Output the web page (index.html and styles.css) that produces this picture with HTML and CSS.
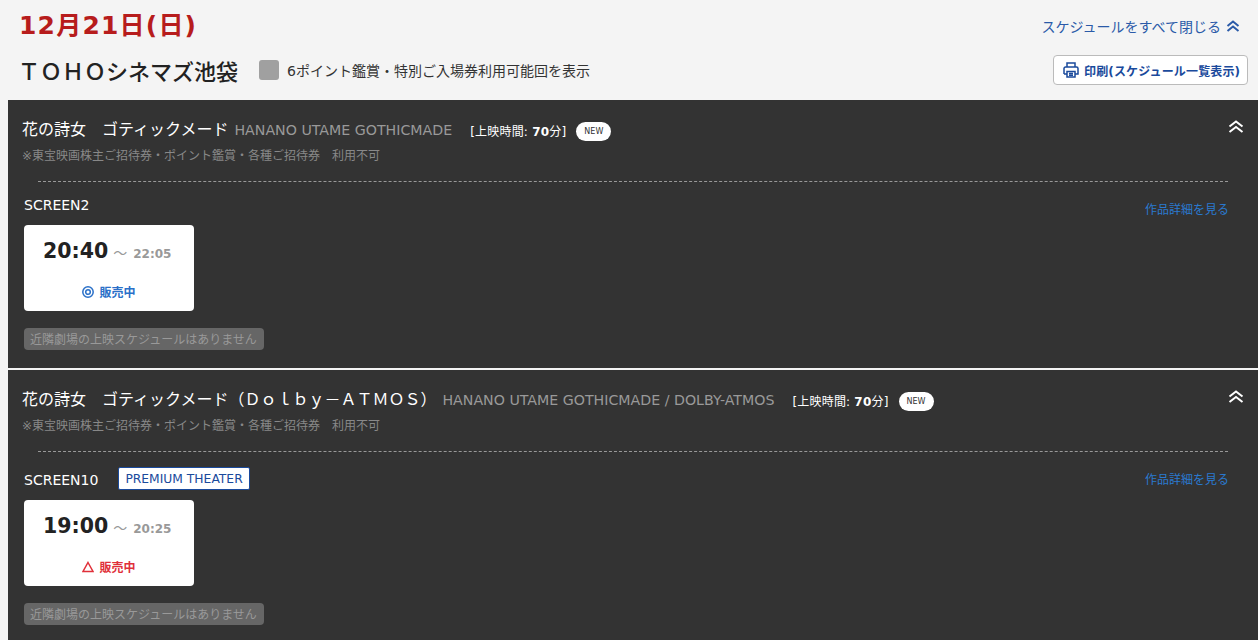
FILE: index.html
```html
<!DOCTYPE html>
<html lang="ja">
<head>
<meta charset="utf-8">
<title>スケジュール</title>
<link rel="stylesheet" href="styles.css">
</head>
<body>
<div class="page">
  <header class="head">
    <div class="head-row date-row">
      <h1 class="date">12月21日(日)</h1>
      <a class="close-all">スケジュールをすべて閉じる
        <svg class="chev" viewBox="0 0 14 12" width="14" height="12"><path d="M1.500 6 7 1.500 12.500 6M1.500 11 7 6.500 12.500 11" fill="none" stroke="currentColor" stroke-width="2"/></svg>
      </a>
    </div>
    <div class="head-row theater-row">
      <div class="theater-left">
        <h2 class="theater">ＴＯＨＯシネマズ池袋</h2>
        <span class="check"></span>
        <span class="check-label">6ポイント鑑賞・特別ご入場券利用可能回を表示</span>
      </div>
      <button class="print">
        <svg viewBox="0 0 16 16" width="16" height="16"><path d="M4 5V1h8v4M1 12V6.500A1.500 1.500 0 0 1 2.500 5h11A1.500 1.500 0 0 1 15 6.500V12h-3M4 12H1M4 9.500h8V15H4zM6 11.500h4M6 13.300h4" fill="none" stroke="currentColor" stroke-width="1.500"/></svg>
        印刷(スケジュール一覧表示)
      </button>
    </div>
  </header>

  <section class="movie first">
    <div class="title-row">
      <span class="title-ja">花の詩女　ゴティックメード</span>
      <span class="title-en">HANANO UTAME GOTHICMADE</span>
      <span class="runtime">[上映時間: <b>70</b>分]</span>
      <span class="new">NEW</span>
      <svg class="chev toggle" viewBox="0 0 16 13" width="16" height="13"><path d="M1.500 6.500 8 1.500 14.500 6.500M1.500 12 8 7 14.500 12" fill="none" stroke="currentColor" stroke-width="2"/></svg>
    </div>
    <p class="notice">※東宝映画株主ご招待券・ポイント鑑賞・各種ご招待券　利用不可</p>
    <div class="divider"></div>
    <div class="screen-row">
      <div class="screen"><span class="screen-name">SCREEN2</span></div>
      <a class="detail">作品詳細を見る</a>
    </div>
    <div class="card">
      <div class="times"><span class="start">20:40</span><span class="tilde">～</span><span class="end">22:05</span></div>
      <div class="status ok">
        <svg viewBox="0 0 12 12" width="12" height="12"><circle cx="6" cy="6" r="5.200" fill="none" stroke="currentColor" stroke-width="1.500"/><circle cx="6" cy="6" r="2.300" fill="none" stroke="currentColor" stroke-width="1.500"/></svg>
        販売中
      </div>
    </div>
    <div class="nearby">近隣劇場の上映スケジュールはありません</div>
  </section>

  <section class="movie second">
    <div class="title-row">
      <span class="title-ja">花の詩女　ゴティックメード（Ｄｏｌｂｙ－ＡＴＭＯＳ）</span>
      <span class="title-en">HANANO UTAME GOTHICMADE / DOLBY-ATMOS</span>
      <span class="runtime">[上映時間: <b>70</b>分]</span>
      <span class="new">NEW</span>
      <svg class="chev toggle" viewBox="0 0 16 13" width="16" height="13"><path d="M1.500 6.500 8 1.500 14.500 6.500M1.500 12 8 7 14.500 12" fill="none" stroke="currentColor" stroke-width="2"/></svg>
    </div>
    <p class="notice">※東宝映画株主ご招待券・ポイント鑑賞・各種ご招待券　利用不可</p>
    <div class="divider"></div>
    <div class="screen-row">
      <div class="screen"><span class="screen-name">SCREEN10</span><span class="premium">PREMIUM THEATER</span></div>
      <a class="detail">作品詳細を見る</a>
    </div>
    <div class="card">
      <div class="times"><span class="start">19:00</span><span class="tilde">～</span><span class="end">20:25</span></div>
      <div class="status low">
        <svg viewBox="0 0 12 12" width="12" height="12"><path d="M6 1.500 11 10.500H1z" fill="none" stroke="currentColor" stroke-width="1.500"/></svg>
        販売中
      </div>
    </div>
    <div class="nearby">近隣劇場の上映スケジュールはありません</div>
  </section>
</div>
</body>
</html>
```
FILE: styles.css
```css
* { box-sizing: border-box; }
html, body { margin: 0; padding: 0; height: 640px; overflow: hidden; }
body {
  background: #f4f4f4;
  color: #222;
  font-family: "DejaVu Sans", "Noto Sans CJK JP", sans-serif;
}
.page { padding-left: 8px; }
.head { height: 100px; padding-right: 10px; }
.head-row { display: flex; justify-content: space-between; align-items: center; }
.date-row { height: 52px; padding-left: 11px; }
.date { margin: 0; font-size: 25px; font-weight: 700; letter-spacing: 1.200px; color: #b71c1c; line-height: 52px; }
.close-all { display: flex; align-items: center; gap: 5px; font-size: 14px; color: #2a5aa8; margin-right: 8px; }
.theater-row { height: 36px; padding-left: 10px; }
.theater-left { display: flex; align-items: center; }
.theater { margin: 0; font-size: 22px; font-weight: 500; color: #222; }
.check { width: 20px; height: 20px; border-radius: 3px; background: #a0a0a0; margin-left: 21px; }
.check-label { font-size: 14px; margin-left: 8px; color: #333; }
.print {
  display: flex; align-items: center; gap: 5px;
  width: 195px; height: 30px; padding: 0 0 0 9px;
  background: #fff; border: 1px solid #bbb; border-radius: 4px;
  color: #1a4a9c; font-size: 12px; font-weight: 700; letter-spacing: .150px;
  font-family: inherit;
}
.movie { background: #333; padding: 16px 14px 0; color: #fff; }
.first { height: 268px; }
.second { height: 270px; margin-top: 2px; }
.title-row { position: relative; display: flex; align-items: center; height: 24px; }
.title-ja { font-size: 16px; color: #fff; }
.title-en { font-size: 14.200px; color: #999; margin: 4px 0 0 6px; }
.runtime { font-size: 12px; letter-spacing: .200px; color: #fff; margin: 4px 0 0 18px; }
.new { display: inline-flex; align-items: center; justify-content: center; width: 35px; height: 19px; margin: 6px 0 0 10px; border-radius: 10px; background: #fff; color: #333; font-size: 8px; }
.toggle { position: absolute; right: 0; top: 4px; color: #fff; }
.notice { margin: 6px 0 0; font-size: 12px; color: #888; line-height: 20px; }
.divider { margin: 15px 16px 0; border-top: 1px dashed #999; }
.screen-row { display: flex; justify-content: space-between; align-items: flex-start; margin: 0 15px 10px 2px; padding-top: 14px; }
.screen { display: flex; align-items: flex-end; }
.screen-name { font-size: 14px; margin-bottom: 1px; line-height: 18px; color: #fff; }
.premium { margin: 1px 0 0 20px; padding: 0 6px; height: 23px; line-height: 22px; background: #fff; border: 1px solid #1a4a9c; border-radius: 2px; color: #1a4a9c; font-size: 12.300px; }
.detail { margin: 5px 0 -4px; font-size: 12px; line-height: 18px; color: #2a7ad0; }
.card { width: 170px; height: 86px; margin-left: 2px; background: #fff; border-radius: 4px; padding: 11px 0 0 19px; color: #222; }
.times { display: flex; align-items: baseline; height: 30px; line-height: 30px; }
.start { font-size: 20.500px; font-weight: 700; color: #222; }
.tilde { font-size: 14px; color: #999; margin: 0 6px 0 5px; }
.end { font-size: 12px; font-weight: 700; color: #999; }
.status { display: flex; align-items: center; justify-content: center; gap: 5px; margin: 17px 0 0 -19px; font-size: 12px; font-weight: 700; }
.ok { color: #2a70c8; }
.low { color: #e0303a; }
.nearby { display: block; margin: 17px 0 0 2px; padding: 0 6px; height: 22px; line-height: 24px; width: 240px; background: #666; border-radius: 4px; color: #999; font-size: 12px; white-space: nowrap; }
```
